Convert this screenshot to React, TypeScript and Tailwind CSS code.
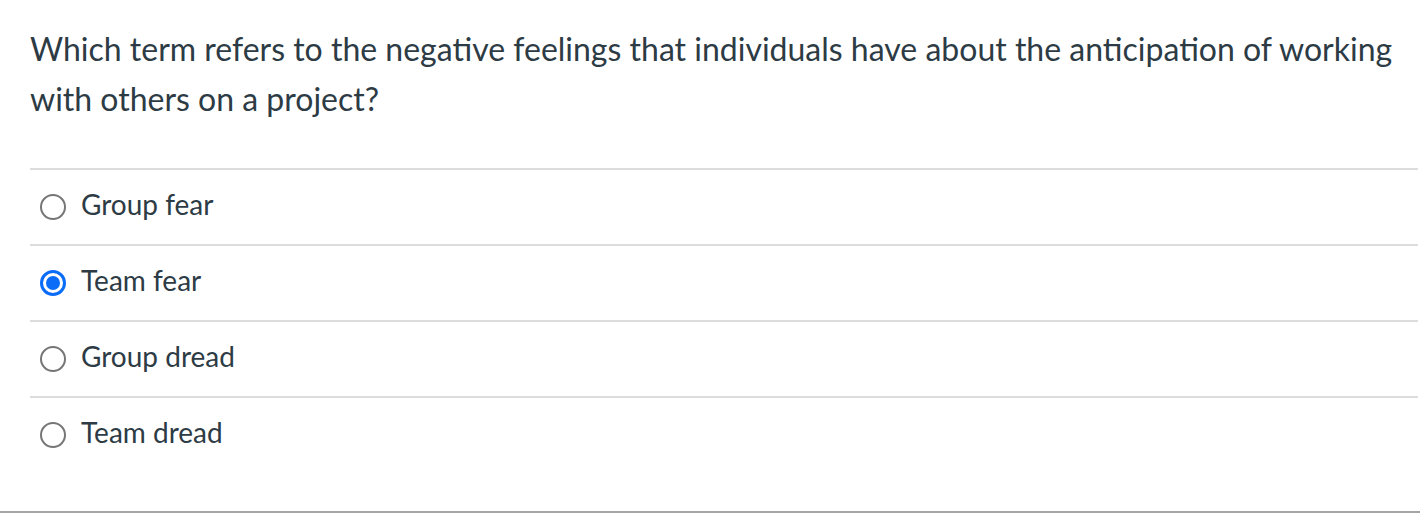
import React, { useState } from "react";

const OPTIONS = ["Group fear", "Team fear", "Group dread", "Team dread"];

const Radio: React.FC<{ checked: boolean }> = ({ checked }) =>
  checked ? (
    <span className="flex h-[26px] w-[26px] shrink-0 items-center justify-center rounded-full border-[3px] border-[#0b6cf8] bg-white">
      <span className="h-[14px] w-[14px] rounded-full bg-[#0b6cf8]" />
    </span>
  ) : (
    <span className="h-[26px] w-[26px] shrink-0 rounded-full border-2 border-[#767676] bg-white" />
  );

export default function App() {
  const [selected, setSelected] = useState(1);

  return (
    <div className="h-[524px] w-[1420px] bg-white font-['Lato',sans-serif] text-[#2d3b45]">
      <div className="border-b-2 border-[#a5a5a5]">
        <div className="pl-[30px] pr-[2px] pt-[24px]">
          <p className="text-[32px] leading-[50px]">
            Which term refers to the negative feelings that individuals have about the anticipation of working
            with others on a project?
          </p>
          <div className="mt-[44px] pb-[39px]">
            {OPTIONS.map((opt, i) => (
              <label
                key={opt}
                onClick={() => setSelected(i)}
                className="flex h-[76px] cursor-pointer items-center gap-[15px] border-t-2 border-[#dcdcdc] pl-[10px]"
              >
                <Radio checked={selected === i} />
                <span className="mb-[6px] text-[28px]">{opt}</span>
              </label>
            ))}
          </div>
        </div>
      </div>
    </div>
  );
}
